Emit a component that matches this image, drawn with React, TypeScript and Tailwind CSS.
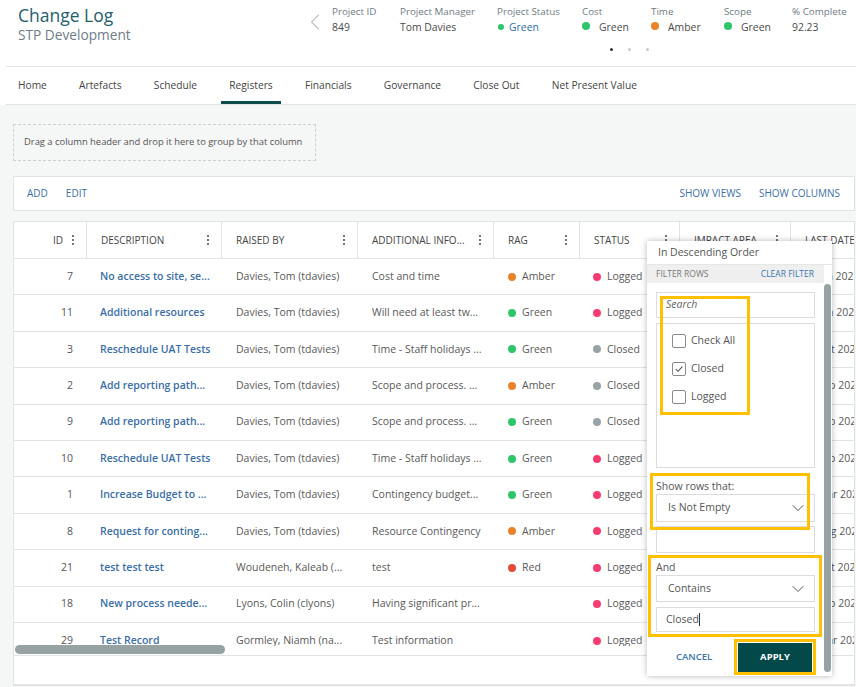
import { ChevronLeft, ChevronDown } from 'lucide-react';

type Row = {
  id: number;
  desc: string;
  by: string;
  info: string;
  rag: string;
  status: string;
  date: string;
};

const rows: Row[] = [
  { id: 7, desc: 'No access to site, se...', by: 'Davies, Tom (tdavies)', info: 'Cost and time', rag: 'Amber', status: 'Logged', date: '12 Jan 2023' },
  { id: 11, desc: 'Additional resources', by: 'Davies, Tom (tdavies)', info: 'Will need at least tw...', rag: 'Green', status: 'Logged', date: '16 Jun 2023' },
  { id: 3, desc: 'Reschedule UAT Tests', by: 'Davies, Tom (tdavies)', info: 'Time - Staff holidays ...', rag: 'Green', status: 'Closed', date: '21 Oct 2022' },
  { id: 2, desc: 'Add reporting path...', by: 'Davies, Tom (tdavies)', info: 'Scope and process. ...', rag: 'Amber', status: 'Closed', date: '14 Feb 2023' },
  { id: 9, desc: 'Add reporting path...', by: 'Davies, Tom (tdavies)', info: 'Scope and process. ...', rag: 'Green', status: 'Closed', date: '14 Feb 2023' },
  { id: 10, desc: 'Reschedule UAT Tests', by: 'Davies, Tom (tdavies)', info: 'Time - Staff holidays ...', rag: 'Green', status: 'Logged', date: '20 Feb 2023' },
  { id: 1, desc: 'Increase Budget to ...', by: 'Davies, Tom (tdavies)', info: 'Contingency budget...', rag: 'Green', status: 'Logged', date: '03 Mar 2023' },
  { id: 8, desc: 'Request for conting...', by: 'Davies, Tom (tdavies)', info: 'Resource Contingency', rag: 'Amber', status: 'Logged', date: '09 Aug 2022' },
  { id: 21, desc: 'test test test', by: 'Woudeneh, Kaleab (...', info: 'test', rag: 'Red', status: 'Logged', date: '11 Oct 2023' },
  { id: 18, desc: 'New process neede...', by: 'Lyons, Colin (clyons)', info: 'Having significant pr...', rag: '', status: 'Logged', date: '27 Feb 2023' },
  { id: 29, desc: 'Test Record', by: 'Gormley, Niamh (na...', info: 'Test information', rag: '', status: 'Logged', date: '08 Mar 2023' },
];

const dotColor: Record<string, string> = {
  Amber: 'bg-[#e8832a]',
  Green: 'bg-[#2ec56b]',
  Red: 'bg-[#e5493a]',
  Logged: 'bg-[#f63d72]',
  Closed: 'bg-[#98a3a3]',
};

const metrics = [
  { label: 'Project ID', value: '849', w: 'w-[68px]' },
  { label: 'Project Manager', value: 'Tom Davies', w: 'w-[97px]' },
  { label: 'Project Status', value: 'Green', w: 'w-[85px]', status: true },
  { label: 'Cost', value: 'Green', w: 'w-[69px]', dot: 'bg-[#2ec56b]' },
  { label: 'Time', value: 'Amber', w: 'w-[73px]', dot: 'bg-[#e8832a]' },
  { label: 'Scope', value: 'Green', w: 'w-[68px]', dot: 'bg-[#2ec56b]' },
  { label: '% Complete', value: '92.23', w: 'w-[64px]' },
];

const tabs = ['Home', 'Artefacts', 'Schedule', 'Registers', 'Financials', 'Governance', 'Close Out', 'Net Present Value'];

const cols = [
  { name: 'ID', w: 'w-[73px]' },
  { name: 'DESCRIPTION', w: 'w-[135px]' },
  { name: 'RAISED BY', w: 'w-[136px]' },
  { name: 'ADDITIONAL INFO...', w: 'w-[136px]' },
  { name: 'RAG', w: 'w-[86px]' },
  { name: 'STATUS', w: 'w-[100px]' },
  { name: 'IMPACT AREA', w: 'w-[111px]' },
  { name: 'LAST DATE', w: 'w-[120px]' },
];

const Kebab = () => (
  <svg width="4" height="12" viewBox="0 0 4 12" className="shrink-0">
    <circle cx="2" cy="2" r="1.1" fill="#555" />
    <circle cx="2" cy="6" r="1.1" fill="#555" />
    <circle cx="2" cy="10" r="1.1" fill="#555" />
  </svg>
);

const Dot = ({ c }: { c: string }) => (
  <span className={`w-[8px] h-[8px] rounded-full shrink-0 ${dotColor[c]}`} />
);

const Check = ({ checked }: { checked?: boolean }) => (
  <span className="w-[14px] h-[14px] border border-[#8a8a8a] rounded-[2px] flex items-center justify-center shrink-0">
    {checked && (
      <svg width="10" height="10" viewBox="0 0 10 10">
        <path d="M1.8 5.2 4 7.3 8.4 2.6" fill="none" stroke="#555" strokeWidth="1.1" />
      </svg>
    )}
  </span>
);

export default function App() {
  return (
    <div className="relative w-[856px] h-[687px] overflow-hidden bg-white font-['Open_Sans',sans-serif] text-[#555]">
      {/* page header */}
      <div className="flex h-[66px]">
        <div className="w-[300px] pl-[18px] pt-[4px]">
          <div className="text-[17.5px] leading-[22px] text-[#245e6c]">Change Log</div>
          <div className="text-[13.7px] leading-[18px] text-[#6e7c87]">STP Development</div>
        </div>
        <div className="w-[32px]">
          <ChevronLeft size={28} strokeWidth={1} className="ml-[1px] mt-[8px] text-[#c2c2c2]" />
        </div>
        <div className="flex flex-col">
          <div className="flex pt-[5px]">
            {metrics.map(m => (
              <div key={m.label} className={`${m.w} shrink-0`}>
                <div className="text-[9.8px] leading-[14px] text-[#6f7a83] whitespace-nowrap">{m.label}</div>
                <div className="text-[10.4px] leading-[16px] text-[#4a4a4a] flex items-center whitespace-nowrap">
                  {m.status && (
                    <>
                      <span className="w-[6px] h-[6px] rounded-full bg-[#2ec56b] mr-[5px] ml-[1px]" />
                      <span className="text-[#2f6ea6]">{m.value}</span>
                    </>
                  )}
                  {m.dot && (
                    <>
                      <span className={`w-[8px] h-[8px] rounded-full mr-[9px] mb-[3px] ${m.dot}`} />
                      <span>{m.value}</span>
                    </>
                  )}
                  {!m.status && !m.dot && <span>{m.value}</span>}
                </div>
              </div>
            ))}
          </div>
          <div className="flex gap-[15px] pl-[278px] mt-[13px]">
            <span className="w-[3px] h-[3px] rounded-full bg-[#333]" />
            <span className="w-[3px] h-[3px] rounded-full bg-[#c8c8c8]" />
            <span className="w-[3px] h-[3px] rounded-full bg-[#c8c8c8]" />
          </div>
        </div>
      </div>

      {/* tabs */}
      <div className="ml-[6px] h-[39px] border-t border-b border-[#e4e4e4] flex gap-[16.3px] pl-[4px]">
        {tabs.map(t => (
          <div
            key={t}
            className={`px-[8px] pt-[3px] flex items-center border-b-[3px] text-[10.2px] text-[#444] whitespace-nowrap ${
              t === 'Registers' ? 'border-[#0e4b4b]' : 'border-transparent'
            }`}
          >
            {t}
          </div>
        ))}
      </div>

      {/* content */}
      <div className="bg-[#f5f6f6] h-[582px] pl-[13px] flex flex-col">
        <div className="mt-[19px] h-[37px] w-[303px] border border-dashed border-[#cfcfcf] pl-[10px] flex items-center text-[9.4px] text-[#555] whitespace-nowrap">
          Drag a column header and drop it here to group by that column
        </div>

        <div className="mt-[15px] h-[35px] w-[842px] bg-white border border-[#e3e3e3] flex items-center justify-between pl-[13px] pr-[14px] text-[10px] text-[#3d6fa3]">
          <div className="flex gap-[18px]">
            <span>ADD</span>
            <span>EDIT</span>
          </div>
          <div className="flex gap-[18px]">
            <span>SHOW VIEWS</span>
            <span>SHOW COLUMNS</span>
          </div>
        </div>

        <div className="mt-[10px] w-[842px] h-[465px] bg-white border border-[#e3e3e3] overflow-hidden flex flex-col">
          {/* column headers */}
          <div className="flex h-[37px] border-b border-[#e3e3e3] shrink-0">
            {cols.map((c, i) => (
              <div
                key={c.name}
                className={`${c.w} shrink-0 border-r border-[#e3e3e3] flex items-center pr-[11px] text-[10px] text-[#444] whitespace-nowrap ${
                  i === 0 ? 'justify-end gap-[8px]' : 'justify-between pl-[14px]'
                }`}
              >
                <span>{c.name}</span>
                <Kebab />
              </div>
            ))}
          </div>

          {/* rows */}
          <div className="h-[387px] overflow-hidden shrink-0">
            {rows.map(r => (
              <div key={r.id} className="flex h-[36.4px] border-b border-[#e3e3e3] items-center text-[10.5px] whitespace-nowrap">
                <div className="w-[73px] shrink-0 text-right pr-[14px] text-[#555]">{r.id}</div>
                <div className="w-[135px] shrink-0 pl-[13px] overflow-hidden font-semibold text-[#3b6ea5]">{r.desc}</div>
                <div className="w-[136px] shrink-0 pl-[14px] overflow-hidden text-[#595959]">{r.by}</div>
                <div className="w-[136px] shrink-0 pl-[14px] overflow-hidden text-[#595959]">{r.info}</div>
                <div className="w-[86px] shrink-0 pl-[14px] flex items-center gap-[6px] text-[#595959]">
                  {r.rag && (
                    <>
                      <Dot c={r.rag} />
                      <span>{r.rag}</span>
                    </>
                  )}
                </div>
                <div className="w-[100px] shrink-0 pl-[13px] flex items-center gap-[6px] text-[#595959]">
                  <Dot c={r.status} />
                  <span>{r.status}</span>
                </div>
                <div className="w-[111px] shrink-0" />
                <div className="w-[120px] shrink-0 pl-[12px] text-[#595959]">{r.date}</div>
              </div>
            ))}
          </div>

          {/* horizontal scrollbar */}
          <div className="h-[10px] border-b border-[#e3e3e3] shrink-0">
            <div className="ml-[1px] -mt-[1px] w-[210px] h-[9px] rounded-full bg-[#97a3a2]" />
          </div>
          <div className="flex-1 border-b border-[#e3e3e3]" />
        </div>
      </div>

      {/* filter popup */}
      <div className="absolute left-[647px] top-[241px] w-[185px] h-[435px] bg-white shadow-[0_0_6px_rgba(0,0,0,0.28)] flex flex-col">
        <div className="h-[24px] border-b border-[#e6e6e6] pl-[11px] flex items-center text-[10.5px] text-[#555]">
          In Descending Order
        </div>
        <div className="h-[18px] mr-[8px] bg-[#efefef] flex items-center justify-between pl-[9px] pr-[10px] text-[8.5px]">
          <span className="text-[#777]">FILTER ROWS</span>
          <span className="text-[#3a74ad]">CLEAR FILTER</span>
        </div>

        <div className="pl-[9px] flex flex-col w-[168px] text-[10.5px] text-[#555]">
          <div className="mt-[9px] h-[26px] w-[159px] border border-[#dcdcdc] pl-[9px] flex items-center italic text-[#666]">
            Search
          </div>
          <div className="mt-[5px] h-[145px] w-[159px] border border-[#dcdcdc] pt-[3px] pl-[15px]">
            <div className="h-[28px] flex items-center gap-[5px]">
              <Check />
              <span>Check All</span>
            </div>
            <div className="h-[28px] flex items-center gap-[5px]">
              <Check checked />
              <span>Closed</span>
            </div>
            <div className="h-[28px] flex items-center gap-[5px]">
              <Check />
              <span>Logged</span>
            </div>
          </div>

          <div className="mt-[10px] h-[16px] leading-[16px]">Show rows that:</div>
          <div className="h-[28px] w-[159px] border border-[#dcdcdc] flex items-center justify-between pl-[11px] pr-[6px]">
            <span>Is Not Empty</span>
            <ChevronDown size={20} strokeWidth={1.2} className="text-[#555]" />
          </div>
          <div className="mt-[4px] h-[27px] w-[159px] border border-[#dcdcdc]" />

          <div className="mt-[6px] h-[16px] leading-[16px]">And</div>
          <div className="h-[27px] w-[159px] border border-[#dcdcdc] flex items-center justify-between pl-[11px] pr-[6px]">
            <span>Contains</span>
            <ChevronDown size={20} strokeWidth={1.2} className="text-[#555]" />
          </div>
          <div className="mt-[5px] h-[25px] w-[159px] border border-[#dcdcdc] pl-[9px] flex items-center">
            <span>Closed</span>
            <span className="w-[1px] h-[13px] bg-[#333]" />
          </div>
        </div>

        <div className="mt-[7px] h-[36px] flex items-center">
          <span className="ml-[29px] text-[9.5px] font-semibold text-[#3a74ad]">CANCEL</span>
          <button className="ml-auto mr-[20px] w-[74px] h-[29px] bg-[#03494a] text-white text-[9.5px] font-bold">
            APPLY
          </button>
        </div>

        {/* popup scrollbar */}
        <div className="absolute top-[43px] right-[1px] bottom-[4px] w-[7px] rounded-full bg-[#97a3a2]" />

        {/* highlight annotations */}
        <div className="absolute left-[13px] top-[55px] w-[90px] h-[119px] border-[3px] border-[#ffc000]" />
        <div className="absolute left-[3px] top-[232px] w-[160px] h-[57px] border-[3px] border-[#ffc000]" />
        <div className="absolute left-[1px] top-[314px] w-[174px] h-[82px] border-[3px] border-[#ffc000]" />
        <div className="absolute left-[87px] top-[398px] w-[82px] h-[36px] border-[3px] border-[#ffc000]" />
      </div>
    </div>
  );
}
